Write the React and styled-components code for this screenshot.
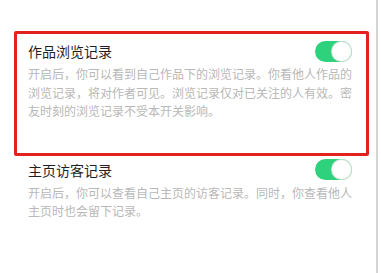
import styled, { createGlobalStyle } from "styled-components";

const GlobalStyle = createGlobalStyle`
  body {
    margin: 0;
    background: #fff;
    font-family: "Noto Sans CJK SC", "Noto Sans", sans-serif;
  }
`;

const Page = styled.div`
  width: 378px;
  height: 273px;
  border-right: 2px solid #d4d4d4;
  padding-top: 31px;
  box-sizing: border-box;
`;

const Section = styled.div`
  width: 355px;
  margin-left: 14px;
  box-sizing: border-box;
  padding: ${(p) => (p.$boxed ? "6px 14px 32px 11px" : "3px 17px 0 14px")};
  border: ${(p) => (p.$boxed ? "3px solid #e3221f" : "none")};
  border-radius: 2px;
`;

const Row = styled.div`
  display: flex;
  align-items: center;
  justify-content: space-between;
  height: 22px;
`;

const Title = styled.div`
  font-size: 14px;
  line-height: 20px;
  color: #1f1f1f;
`;

const Desc = styled.p`
  margin: 3px 0 0;
  font-size: 12px;
  line-height: 18.5px;
  color: #b8b8b8;
  text-align: justify;
`;

const Switch = styled.div`
  width: 37px;
  height: 21px;
  border-radius: 11px;
  background: #2fd27c;
  display: flex;
  align-items: center;
  justify-content: flex-end;
  padding: 1px;
  box-sizing: border-box;
`;

const Knob = styled.div`
  width: 19px;
  height: 19px;
  border-radius: 50%;
  background: #fff;
  box-shadow: 0 0 0 1px #cfe3d6;
`;

const items = [
  {
    title: "作品浏览记录",
    desc: "开启后，你可以看到自己作品下的浏览记录。你看他人作品的浏览记录，将对作者可见。浏览记录仅对已关注的人有效。密友时刻的浏览记录不受本开关影响。",
    boxed: true,
  },
  {
    title: "主页访客记录",
    desc: "开启后，你可以查看自己主页的访客记录。同时，你查看他人主页时也会留下记录。",
    boxed: false,
  },
];

export default function App() {
  return (
    <>
      <GlobalStyle />
      <Page>
        {items.map((item) => (
          <Section key={item.title} $boxed={item.boxed}>
            <Row>
              <Title>{item.title}</Title>
              <Switch>
                <Knob />
              </Switch>
            </Row>
            <Desc>{item.desc}</Desc>
          </Section>
        ))}
      </Page>
    </>
  );
}
